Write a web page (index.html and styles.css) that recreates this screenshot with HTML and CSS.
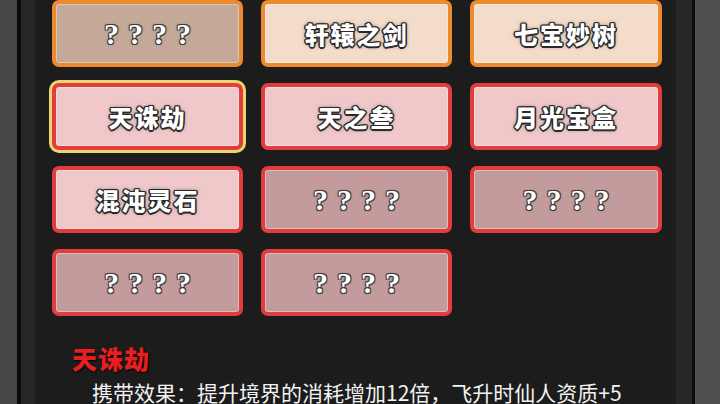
FILE: index.html
```html
<!DOCTYPE html>
<html lang="zh">
<head>
    <meta charset="UTF-8">
    <meta name="viewport" content="width=device-width, initial-scale=1.0">
    <title>法宝</title>
    <link rel="stylesheet" href="styles.css">
</head>
<body>

    <div class="screen">
        <div class="window">
            <div class="panel">
                <div class="grid">
                    <div class="slot orange unknown"><span class="ask">????</span></div>
                    <div class="slot orange"><span class="name">轩辕之剑</span></div>
                    <div class="slot orange"><span class="name">七宝妙树</span></div>

                    <div class="slot red selected"><span class="name">天诛劫</span></div>
                    <div class="slot red"><span class="name">天之叁</span></div>
                    <div class="slot red"><span class="name">月光宝盒</span></div>

                    <div class="slot red"><span class="name">混沌灵石</span></div>
                    <div class="slot red unknown"><span class="ask">????</span></div>
                    <div class="slot red unknown"><span class="ask">????</span></div>

                    <div class="slot red unknown"><span class="ask">????</span></div>
                    <div class="slot red unknown"><span class="ask">????</span></div>
                </div>

                <div class="info">
                    <h2>天诛劫</h2>
                    <p>携带效果：提升境界的消耗增加12倍，飞升时仙人资质+5</p>
                </div>
            </div>
        </div>
    </div>

</body>
</html>
```

FILE: styles.css
```css
* {
    margin: 0;
    padding: 0;
    box-sizing: border-box;
}
body {
    background-color: #474747;
    width: 720px;
    height: 404px;
    overflow: hidden;
    font-family: "Noto Sans CJK SC", "Noto Sans", sans-serif;
}
.screen {
    height: 404px;
    padding-left: 17px;
    background: linear-gradient(to right, #464646 0, #464646 17px, #505050 695px);
}
.window {
    width: 678px;
    height: 100%;
    border-left: 4px solid #0b0b0b;
    border-right: 3px solid #0b0b0b;
    background-color: #272727;
    padding: 0 16px 0 14px;
}
.panel {
    height: 100%;
    background-color: #1c1c1c;
    padding: 0 14px 0 17px;
}
.grid {
    display: grid;
    grid-template-columns: 191px 191px 192px;
    grid-auto-rows: 67px;
    column-gap: 18px;
    row-gap: 16px;
}
.slot {
    display: flex;
    justify-content: center;
    align-items: center;
    border: 4px solid;
    border-radius: 7px;
    box-shadow: inset 0 0 0 1px rgba(255, 255, 255, 0.35);
}
.orange {
    border-color: #ec8b2d;
    background-color: #f3dcc9;
}
.orange.unknown {
    background-color: #c4a999;
}
.red {
    border-color: #e23c3d;
    background-color: #f1c8c9;
}
.red.unknown {
    background-color: #c49b9c;
}
.selected {
    box-shadow: 0 0 0 3px #e8d66e, inset 0 0 0 1px rgba(255, 255, 255, 0.35);
}
.name {
    font-size: 24px;
    font-weight: 900;
    letter-spacing: 2px;
    color: #ffffff;
    text-shadow:
        1px 1px 0 #2a2a2a, -1px -1px 0 #2a2a2a, 1px -1px 0 #2a2a2a, -1px 1px 0 #2a2a2a,
        0 1.5px 0 #2a2a2a, 0 -1.5px 0 #2a2a2a, 1.5px 0 0 #2a2a2a, -1.5px 0 0 #2a2a2a,
        0 0 4px #555555;
}
.ask {
    font-family: "Liberation Serif", serif;
    font-size: 30px;
    font-weight: bold;
    letter-spacing: 9px;
    padding-left: 9px;
    color: #ffffff;
    text-shadow:
        1px 1px 0 #3a3a3a, -1px -1px 0 #3a3a3a, 1px -1px 0 #3a3a3a, -1px 1px 0 #3a3a3a,
        0 0 3px #555555;
}
.info {
    padding: 26px 0 0 20px;
}
.info h2 {
    font-size: 25px;
    font-weight: 900;
    color: #e61f1f;
    line-height: 32px;
    letter-spacing: 1px;
    text-shadow: 1px 1px 2px #000000;
}
.info p {
    margin-top: 5px;
    padding-left: 20px;
    font-size: 21px;
    line-height: 26px;
    color: #f2f2f2;
    white-space: nowrap;
}
```
